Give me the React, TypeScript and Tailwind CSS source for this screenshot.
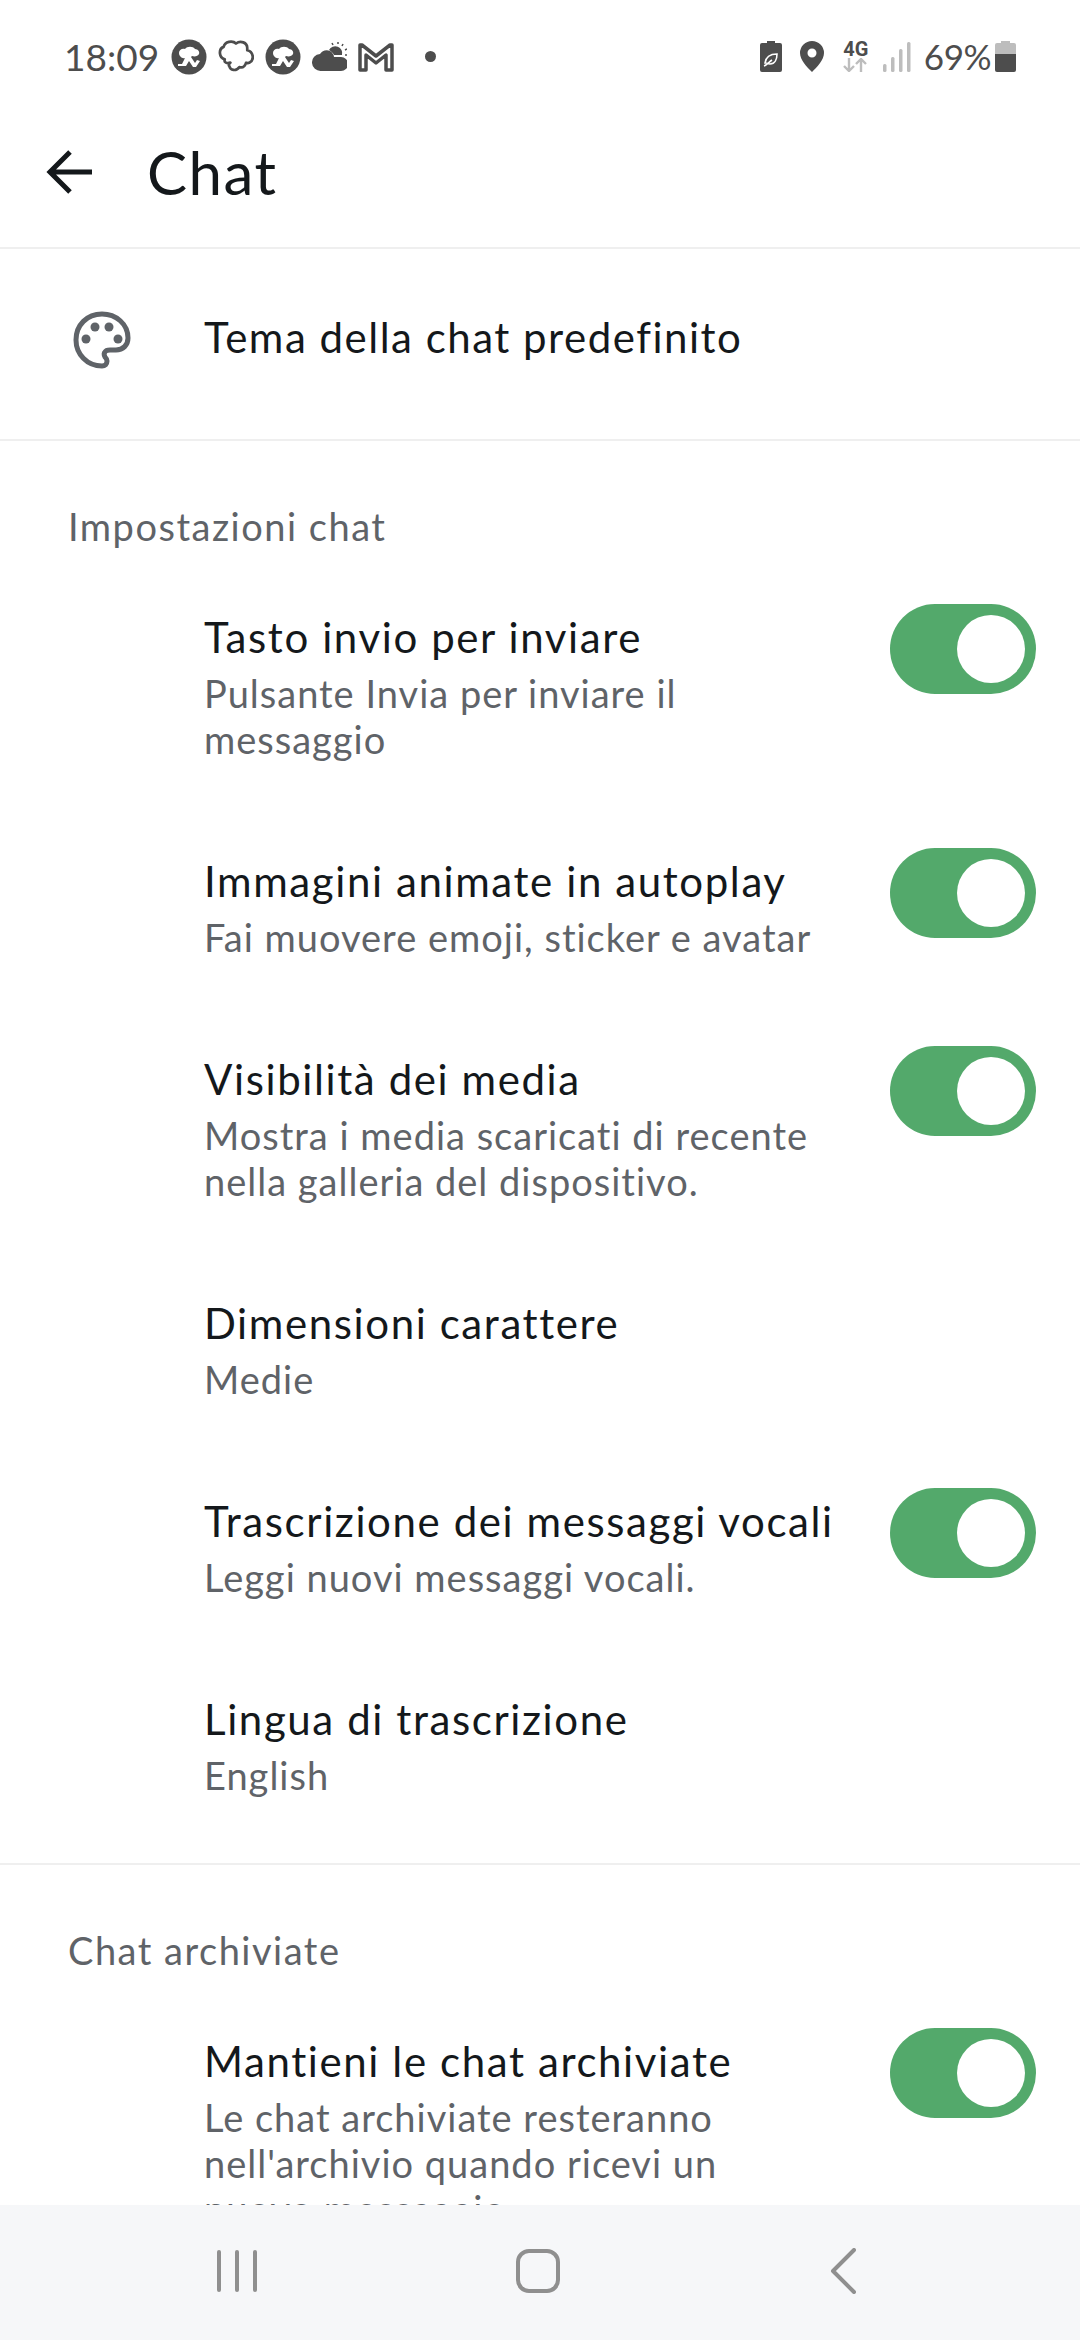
const Toggle = () => (
  <div className="mt-[-1px] flex h-[90px] w-[146px] shrink-0 items-center justify-end rounded-full bg-[#53a96b] pr-[11px]">
    <div className="h-[68px] w-[68px] rounded-full bg-white" />
  </div>
);

type RowProps = {
  title: string;
  sub: string[];
  toggle?: boolean;
  className?: string;
};

const Row = ({ title, sub, toggle, className }: RowProps) => (
  <div className={`flex items-start justify-between pt-[43px] pl-[204px] pr-[44px] ${className ?? ''}`}>
    <div>
      <div className="mb-[1px] text-[42px] leading-[64px] tracking-[1.6px] whitespace-nowrap text-[#14181b]">{title}</div>
      {sub.map((line) => (
        <div key={line} className="whitespace-nowrap text-[38px] leading-[46px] tracking-[1px] text-[#5f6368]">
          {line}
        </div>
      ))}
    </div>
    {toggle && <Toggle />}
  </div>
);

const SectionLabel = ({ children }: { children: string }) => (
  <div className="pt-[60px] pb-[1px] pl-[68px] text-[38px] leading-[50px] tracking-[1.5px] text-[#5f6368]">{children}</div>
);

const TreeCircle = () => (
  <svg width="36" height="36" viewBox="0 0 36 36">
    <circle cx="18" cy="18" r="17.5" fill="#4d4d4d" />
    <path d="M8 14c0-3 3-5 6-4 2-3 8-3 10 0 3 0 5 3 4 5-1 2-4 3-7 2l-1 1 4 6 2-3 3 1-4 6h-3l-4-6-3 5H7v-2l4 0 3-6c-3 1-6-2-6-5z" fill="#fff" />
  </svg>
);

const Flower = () => (
  <svg width="36" height="34" viewBox="2 2 32 30" fill="none" stroke="#4d4d4d" strokeWidth="2.4" strokeLinejoin="round">
    <path d="M8 19c-5-1-6-9-1-11 1-5 8-6 11-3 4-3 10-1 10 4 0 2 0 2 0 2 5 1 7 8 2 11-1 0-2 1-3 0-1 3-3 5-6 4-3 4-8 3-9-1-1-1 0-2 1-3-3 1-6 0-5-3z" />
  </svg>
);

const Weather = () => (
  <svg width="35" height="30" viewBox="0 0 35 30">
    <path d="M9 29a8.500 8.500 0 0 1-1-17c2-3 6-5 10-3 2 1 4 4 4 6h7a7 7 0 0 1 0 14z" fill="#4d4d4d" />
    <path d="M17 8a7 7 0 0 1 13 5h-8c-1-2-3-4-5-5z" fill="#4d4d4d" />
    <path d="M20 1l1 2M26 0v2M31 2l-1 2M35 7l-2 1M35 13h-2" stroke="#4d4d4d" strokeWidth="1.500" />
  </svg>
);

const Gmail = () => (
  <svg width="36" height="30" viewBox="0 0 36 30" fill="none" stroke="#4d4d4d" strokeWidth="3.500" strokeLinejoin="round">
    <path d="M2 3v25h6V13l10 8 10-8v15h6V3h-2L18 14 4 3z" />
  </svg>
);

const BatteryLeaf = () => (
  <svg width="22" height="31" viewBox="0 0 22 31">
    <path d="M7 0h8v2h5a2 2 0 0 1 2 2v25a2 2 0 0 1-2 2H2a2 2 0 0 1-2-2V4a2 2 0 0 1 2-2h5z" fill="#4d4d4d" />
    <path d="M5 22c1-7 6-9 12-9 0 5-2 10-7 10-2 0-3-1-4-1zM4 25c3-1 5-4 8-6" fill="none" stroke="#fff" strokeWidth="1.600" />
  </svg>
);

const Pin = () => (
  <svg width="24" height="31" viewBox="0 0 24 31">
    <path fillRule="evenodd" d="M12 0a12 12 0 0 1 12 12c0 7-7 14-12 19C7 26 0 19 0 12A12 12 0 0 1 12 0zm0 7.500a4.500 4.500 0 1 0 0 9 4.500 4.500 0 0 0 0-9z" fill="#4d4d4d" />
  </svg>
);

const DataArrows = () => (
  <svg width="25" height="14" viewBox="0 0 25 14" fill="none" stroke="#bdbdbd" strokeWidth="2.400">
    <path d="M6 0v13M1 8l5 5 5-5M18 14V1M13 6l5-5 5 5" />
  </svg>
);

const Signal = () => (
  <svg width="28" height="30" viewBox="0 0 28 30" fill="#bdbdbd">
    <rect x="0" y="22" width="3.500" height="8" rx="1.500" />
    <rect x="8" y="15" width="3.500" height="15" rx="1.500" />
    <rect x="16" y="7" width="3.500" height="23" rx="1.500" />
    <rect x="24" y="0" width="3.500" height="30" rx="1.500" />
  </svg>
);

const Battery = () => (
  <svg width="21" height="31" viewBox="0 0 21 31">
    <path d="M6 0h9v2h4a2 2 0 0 1 2 2v9H0V4a2 2 0 0 1 2-2h4z" fill="#bdbdbd" />
    <path d="M0 13h21v16a2 2 0 0 1-2 2H2a2 2 0 0 1-2-2z" fill="#4d4d4d" />
  </svg>
);

const Palette = () => (
  <svg width="60" height="60" viewBox="0 0 60 60" fill="none">
    <path
      d="M30 4C15 4 4 15 4 30c0 14 11 26 26 26 3 0 5-2 5-5 0-1-1-3-2-4-1-2-1-4 0-5 1-2 3-2 5-2h6c7 0 12-5 12-12C56 14 44 4 30 4z"
      stroke="#5f6368"
      strokeWidth="5"
    />
    <g fill="#5f6368">
      <circle cx="14" cy="29" r="4.500" />
      <circle cx="23" cy="17" r="4.500" />
      <circle cx="37" cy="17" r="4.500" />
      <circle cx="46" cy="29" r="4.500" />
    </g>
  </svg>
);

export default function App() {
  return (
    <div className="flex h-[2340px] w-[1080px] flex-col overflow-hidden bg-white font-['Lato',sans-serif]">
      {/* status bar */}
      <div className="flex h-[114px] shrink-0 items-center pl-[64px] pr-[64px] pb-[1px]">
        <span className="w-[107px] text-[37px] text-[#4d4d4d]">18:09</span>
        <div className="flex items-center gap-[11px]">
          <TreeCircle />
          <Flower />
          <TreeCircle />
          <Weather />
          <Gmail />
        </div>
        <div className="ml-[31px] h-[11px] w-[11px] rounded-full bg-[#4d4d4d]" />
        <div className="ml-auto flex items-center">
          <BatteryLeaf />
          <div className="ml-[18px]">
            <Pin />
          </div>
          <div className="ml-[19px] flex w-[26px] flex-col items-center">
            <span className="font-['Roboto',sans-serif] text-[20px] leading-[17px] font-bold text-[#4d4d4d]">4G</span>
            <DataArrows />
          </div>
          <div className="ml-[14px]">
            <Signal />
          </div>
          <span className="ml-[13px] text-[35px] tracking-[-0.5px] text-[#4d4d4d]">69%</span>
          <div className="ml-[4px]">
            <Battery />
          </div>
        </div>
      </div>

      {/* header */}
      <div className="flex h-[135px] shrink-0 items-center border-b-2 border-[#efefef] pb-[18px] pl-[46px]">
        <svg width="46" height="46" viewBox="0 0 46 46" fill="none" stroke="#14181b" strokeWidth="5">
          <path d="M46 23H4M24 3L4 23l20 20" />
        </svg>
        <span className="ml-[55px] text-[60px] tracking-[1.5px] text-[#14181b]">Chat</span>
      </div>

      {/* scrolling list */}
      <div className="min-h-0 flex-1 overflow-hidden">
        <div className="flex h-[192px] items-center border-b-2 border-[#efefef] pb-[8px] pl-[72px]">
          <Palette />
          <span className="mb-[6px] ml-[72px] text-[42px] tracking-[1.5px] text-[#14181b]">Tema della chat predefinito</span>
        </div>

        <SectionLabel>Impostazioni chat</SectionLabel>
        <Row className="mt-[10px] pb-[44px]" title="Tasto invio per inviare" sub={['Pulsante Invia per inviare il', 'messaggio']} toggle />
        <Row className="pb-[44px]" title="Immagini animate in autoplay" sub={['Fai muovere emoji, sticker e avatar']} toggle />
        <Row className="pb-[44px]" title="Visibilità dei media" sub={['Mostra i media scaricati di recente', 'nella galleria del dispositivo.']} toggle />
        <Row className="pb-[44px]" title="Dimensioni carattere" sub={['Medie']} />
        <Row className="pb-[44px]" title="Trascrizione dei messaggi vocali" sub={['Leggi nuovi messaggi vocali.']} toggle />
        <Row className="border-b-2 border-[#efefef] pb-[65px]" title="Lingua di trascrizione" sub={['English']} />

        <SectionLabel>Chat archiviate</SectionLabel>
        <Row className="mt-[10px]" title="Mantieni le chat archiviate" sub={['Le chat archiviate resteranno', "nell'archivio quando ricevi un", 'nuovo messaggio']} toggle />
      </div>

      {/* nav bar */}
      <div className="flex h-[135px] shrink-0 items-center bg-[#f6f7f9] pb-[4px]">
        <div className="ml-[217px] flex h-[42px] w-[40px] justify-between">
          <div className="w-[4px] rounded-full bg-[#8f8f8f]" />
          <div className="w-[4px] rounded-full bg-[#8f8f8f]" />
          <div className="w-[4px] rounded-full bg-[#8f8f8f]" />
        </div>
        <div className="ml-[259px] h-[44px] w-[44px] rounded-[13px] border-[4px] border-[#8f8f8f]" />
        <svg className="ml-[270px]" width="26" height="46" viewBox="0 0 26 46" fill="none" stroke="#8f8f8f" strokeWidth="4" strokeLinecap="round" strokeLinejoin="round">
          <path d="M24 2L3 23l21 21" />
        </svg>
      </div>
    </div>
  );
}
